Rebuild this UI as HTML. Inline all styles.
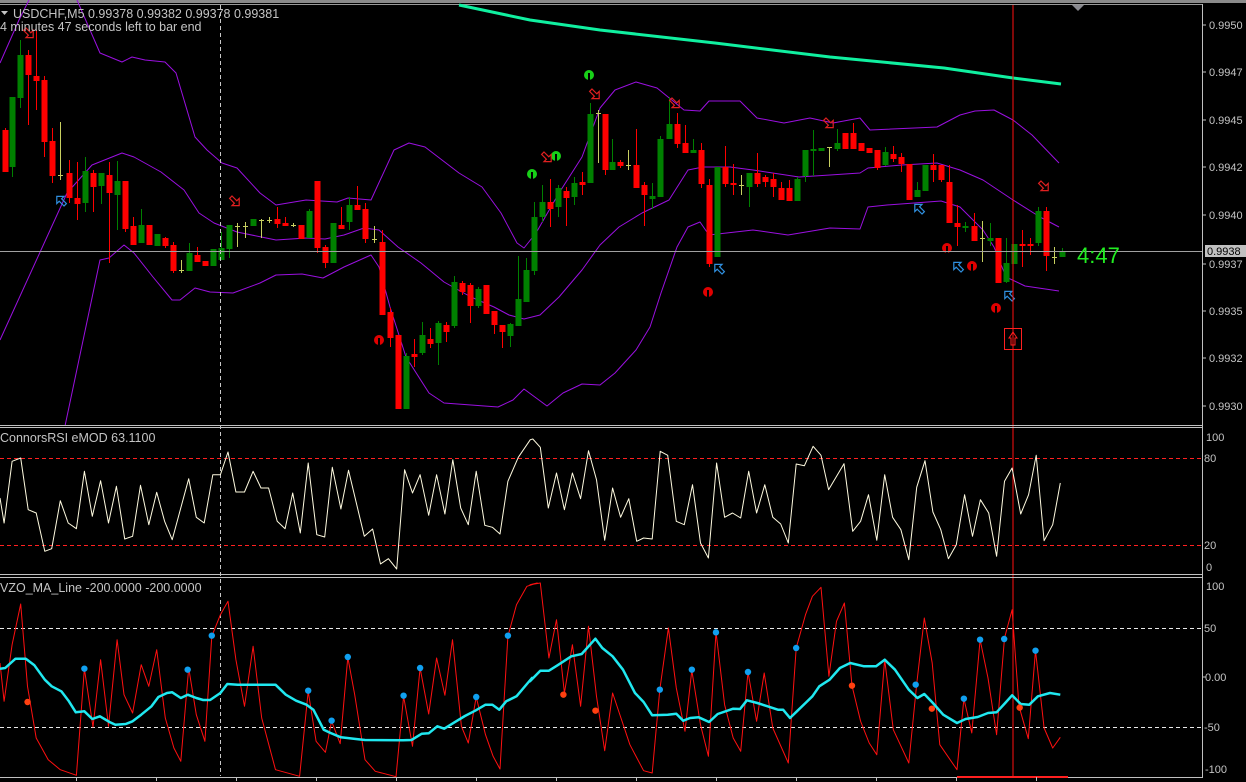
<!DOCTYPE html>
<html><head><meta charset="utf-8"><style>
html,body{margin:0;padding:0;background:#000;width:1246px;height:782px;overflow:hidden}
svg{display:block}
text{font-family:"Liberation Sans","DejaVu Sans",sans-serif}
</style></head><body>
<svg id="s" width="1246" height="782" xmlns="http://www.w3.org/2000/svg">
<rect width="1246" height="782" fill="#000"/>
<rect x="0" y="0" width="1246" height="3" fill="#8a8a8a"/>
<line x1="0" y1="4.5" x2="1202" y2="4.5" stroke="#9a9a9a"/>
<polygon points="1072,5 1084,5 1078,11" fill="#8a8a90"/>
<g id="main"></g>
<line x1="220.5" y1="5" x2="220.5" y2="776" stroke="#c8c8c8" stroke-dasharray="4,3"/>
<line x1="1013" y1="5" x2="1013" y2="777" stroke="#ff1010"/>
<g stroke="#c0c0c0" fill="none">
<line x1="1202.5" y1="4" x2="1202.5" y2="778"/>
<line x1="0" y1="425.5" x2="1203" y2="425.5"/>
<line x1="0" y1="427.5" x2="1203" y2="427.5"/>
<line x1="0" y1="574.5" x2="1203" y2="574.5"/>
<line x1="0" y1="577.5" x2="1203" y2="577.5"/>
<line x1="0" y1="777.5" x2="1203" y2="777.5"/>
</g>
<line x1="0" y1="251.5" x2="1202" y2="251.5" stroke="#a0a0a0"/>
<g font-size="12.5" fill="#c4c4c4">
<text x="13" y="18">USDCHF,M5  0.99378 0.99382 0.99378 0.99381</text>
<text x="0" y="31">4 minutes 47 seconds left to bar end</text>
<text x="0" y="442">ConnorsRSI eMOD 63.1100</text>
<text x="0" y="592">VZO_MA_Line -200.0000 -200.0000</text>
</g>
<polygon points="1,11 8,11 4.5,15" fill="#c4c4c4"/>
<g font-size="11" fill="#c4c4c4" id="ax">
<text x="1209" y="29">0.9950</text><text x="1209" y="76">0.9947</text>
<text x="1209" y="124">0.9945</text><text x="1209" y="171">0.9942</text>
<text x="1209" y="219">0.9940</text><text x="1209" y="268">0.9937</text>
<text x="1209" y="315">0.9935</text><text x="1209" y="362">0.9932</text>
<text x="1209" y="410">0.9930</text>
<text x="1206" y="441">100</text><text x="1204" y="462">80</text>
<text x="1204" y="549">20</text><text x="1206" y="571">0</text>
<text x="1206" y="590">100</text><text x="1204" y="632">50</text>
<text x="1205" y="681">0.00</text><text x="1204" y="731">-50</text>
<text x="1205" y="773">-100</text>
</g>
<rect x="1205" y="245" width="41" height="12" fill="#c0c0c0"/>
<text x="1207" y="255" font-size="11" fill="#000">0.9938</text>
<g stroke="#c0c0c0">
<line x1="1202" y1="25" x2="1206" y2="25"/><line x1="1202" y1="72" x2="1206" y2="72"/>
<line x1="1202" y1="120" x2="1206" y2="120"/><line x1="1202" y1="167" x2="1206" y2="167"/>
<line x1="1202" y1="215" x2="1206" y2="215"/><line x1="1202" y1="264" x2="1206" y2="264"/>
<line x1="1202" y1="311" x2="1206" y2="311"/><line x1="1202" y1="358" x2="1206" y2="358"/>
<line x1="1202" y1="406" x2="1206" y2="406"/><line x1="1202" y1="677" x2="1206" y2="677"/>
</g>
<text x="1077" y="263" font-size="22" fill="#22ee22">4:47</text>
<rect x="1004.5" y="328.5" width="17" height="21" fill="none" stroke="#ff2020"/>
<path d="M1013,332 L1009,338 L1011,338 L1011,345 L1015,345 L1015,338 L1017,338 Z" fill="none" stroke="#ff2020"/>
<line x1="957" y1="777" x2="1068" y2="777" stroke="#ff2020" stroke-width="2"/>
</svg>
<script>
var s=document.getElementById('s'),g=document.getElementById('main'),NS='http://www.w3.org/2000/svg';
function el(t,a,p){var e=document.createElementNS(NS,t);for(var k in a)e.setAttribute(k,a[k]);(p||g).appendChild(e);return e;}
function pl(pts,c,w,p){el('polyline',{points:pts.map(function(q){return q.join(',')}).join(' '),fill:'none',stroke:c,'stroke-width':w||1,'stroke-linejoin':'round'},p);}
var P='#9a10e0';
pl([[0,63],[19,20],[29,0]],P);
pl([[77,0],[100,53],[122,62],[132,57],[145,60],[165,62],[176,73],[195,137],[207,150],[222,163],[237,168],[260,193],[276,205],[306,200],[337,202],[348,198],[371,200],[394,150],[409,143],[425,147],[459,173],[482,187],[501,213],[517,243],[524,248],[536,233],[559,193],[582,157],[600,108],[615,90],[636,82],[657,88],[684,110],[700,111],[709,101],[740,101],[757,118],[784,123],[810,118],[833,123],[860,118],[870,130],[937,127],[960,115],[975,111],[994,110],[1013,120],[1032,135],[1059,163]],P);
pl([[0,340],[67,193],[92,165],[122,153],[134,157],[161,172],[184,190],[199,213],[214,223],[237,232],[276,240],[306,238],[325,239],[344,235],[364,228],[379,230],[398,247],[421,263],[444,282],[471,297],[494,307],[509,315],[524,319],[540,315],[559,297],[582,270],[600,245],[619,227],[642,213],[669,200],[688,170],[703,167],[730,167],[753,170],[799,177],[830,175],[860,173],[868,168],[902,165],[937,163],[960,170],[983,180],[1013,200],[1040,217],[1059,227]],P);
pl([[65,426],[100,260],[109,258],[124,245],[134,253],[153,277],[172,300],[180,300],[195,288],[210,292],[233,293],[260,283],[276,275],[302,274],[323,278],[344,267],[371,255],[379,267],[390,307],[406,357],[429,393],[444,403],[498,407],[513,400],[524,389],[547,406],[563,393],[582,384],[600,385],[615,373],[636,350],[650,327],[661,293],[677,247],[688,227],[700,222],[709,235],[753,230],[788,235],[830,228],[860,229],[868,207],[887,205],[941,201],[960,207],[983,230],[994,247],[1006,277],[1025,286],[1059,291]],P);
pl([[459,5],[530,20],[600,30],[715,43],[830,57],[944,68],[1013,78],[1061,84]],'#10f0a0',3);
var C=[[5,'R',130,172,128,172],[12,'G',97,167,97,177],[20,'G',55,98,40,108],[28,'R',55,75,50,125],[36,'R',76,81,30,110],[44,'R',80,142,76,157],[52,'R',141,176,128,183],[60,'Y',175,175,122,180],[69,'R',173,198,160,203],[77,'R',198,204,162,220],[85,'G',171,203,157,212],[93,'R',173,187,170,212],[101,'G',173,186,173,204],[109,'R',175,193,162,263],[117,'G',181,195,161,230],[125,'R',181,229,181,232],[133,'R',226,245,217,245],[141,'G',225,243,209,243],[149,'R',225,245,225,245],[157,'G',234,246,234,246],[165,'R',238,246,237,248],[173,'R',245,271,242,273],[181,'Y',270,270,260,273],[189,'G',253,271,243,271],[197,'R',255,262,247,262],[205,'R',261,266,261,266],[213,'G',249,266,249,266],[221,'G',248,260,232,260],[229,'G',225,249,225,258],[237,'Y',226,226,223,247],[245,'Y',226,226,222,238],[253,'G',219,226,219,226],[261,'Y',220,220,219,238],[269,'Y',220,220,217,223],[277,'R',219,224,207,228],[285,'R',223,226,217,226],[293,'Y',225,225,223,227],[301,'R',225,239,225,239],[309,'G',211,238,209,238],[317,'R',181,248,181,253],[325,'R',247,263,245,268],[333,'G',223,263,223,263],[341,'R',225,229,207,229],[349,'G',205,222,197,230],[357,'R',205,210,186,210],[365,'R',209,239,203,243],[374,'Y',239,239,226,243],[382,'R',242,315,230,315],[390,'R',312,338,308,347],[398,'R',335,409,335,409],[406,'G',356,409,353,409],[414,'R',354,357,339,367],[422,'G',335,353,322,355],[430,'R',339,344,328,348],[438,'G',323,343,321,365],[446,'R',325,332,322,342],[454,'G',282,326,276,328],[462,'R',283,292,281,295],[470,'R',285,306,283,323],[478,'G',289,306,287,308],[486,'R',285,314,285,314],[494,'R',311,325,311,334],[502,'R',325,332,325,348],[510,'G',324,336,323,347],[518,'G',299,326,256,326],[526,'G',270,302,258,302],[534,'G',217,271,202,275],[542,'G',202,217,185,222],[550,'R',202,209,179,227],[558,'G',188,207,185,217],[566,'R',191,198,187,226],[574,'G',183,197,177,205],[582,'R',182,185,172,195],[590,'G',114,183,103,183],[598,'Y',113,113,110,163],[605,'R',114,170,114,175],[612,'G',162,170,139,170],[620,'R',162,166,160,168],[628,'Y',165,165,150,170],[636,'R',165,188,129,188],[644,'R',185,195,182,226],[652,'G',196,199,183,209],[660,'G',139,197,136,197],[669,'G',124,139,97,139],[677,'R',124,144,113,148],[685,'R',143,153,125,153],[693,'G',150,153,139,153],[701,'R',150,184,143,188],[709,'R',185,264,179,267],[717,'G',167,257,167,257],[725,'R',167,184,146,187],[733,'R',183,185,164,195],[741,'Y',185,185,175,195],[749,'G',173,187,173,207],[757,'R',173,184,153,187],[765,'R',177,182,175,187],[773,'R',179,187,173,197],[781,'R',188,200,182,200],[789,'R',188,201,180,201],[797,'G',179,201,177,201],[805,'G',150,176,150,182],[813,'G',149,151,130,176],[821,'G',148,151,148,151],[829,'Y',147,147,147,167],[837,'G',143,149,129,151],[845,'R',133,149,133,149],[853,'R',133,149,123,149],[861,'R',143,151,143,151],[869,'R',148,153,148,153],[877,'R',150,168,150,170],[885,'G',152,165,147,166],[893,'R',154,159,146,162],[901,'R',157,164,153,172],[909,'R',164,200,164,200],[917,'G',190,197,182,197],[925,'G',165,191,165,191],[933,'R',165,170,154,182],[941,'R',165,180,165,182],[949,'R',182,223,165,223],[957,'R',223,227,205,246],[965,'G',226,227,222,232],[974,'R',226,241,213,241],[982,'Y',238,238,221,262],[990,'G',238,241,223,246],[998,'R',238,283,238,283],[1006,'G',263,282,238,283],[1014,'G',244,264,244,264],[1022,'R',244,246,230,267],[1030,'R',244,246,238,255],[1038,'G',211,243,207,246],[1046,'R',211,256,207,271],[1054,'Y',257,257,247,264],[1062,'G',252,257,248,257]];
var col={R:'#ff0000',G:'#008000',Y:'#c8d060'};
C.forEach(function(c){var k=col[c[1]];el('line',{x1:c[0]+.5,y1:c[4],x2:c[0]+.5,y2:c[5],stroke:k});
 if(c[1]=='Y'){el('line',{x1:c[0]-2,y1:c[2]+.5,x2:c[0]+3,y2:c[2]+.5,stroke:k});}
 else el('rect',{x:c[0]-2.5,y:c[2],width:6,height:Math.max(2,c[3]-c[2]),fill:k});});
function circ(x,y,c){el('circle',{cx:x,cy:y,r:5,fill:c});el('rect',{x:x-1,y:y-2,width:2,height:7,fill:'#000'});}
[[379,340],[708,292],[947,248],[972,266],[996,308]].forEach(function(p){circ(p[0],p[1],'#e00000');});
[[589,75],[532,174],[556,156]].forEach(function(p){circ(p[0],p[1],'#18d018');});
function arr(x,y,c,down){var d=down?'M0,0 L4,4 L6,2 L6,8 L0,8 L2,6 L-2,2 Z':'M0,0 L-4,-4 L-6,-2 L-6,-8 L0,-8 L-2,-6 L2,-2 Z';el('path',{d:d,transform:'translate('+x+','+y+') scale(1.2)',fill:'none',stroke:c});}
[[236,200],[596,93],[548,156],[676,102],[830,122],[1045,185],[30,32]].forEach(function(p){arr(p[0]-4,p[1]-4,'#e02020',true);});
[[60,202],[718,270],[918,210],[957,268],[1008,297]].forEach(function(p){arr(p[0]+4,p[1]+4,'#3090e0',false);});
var L=s;
[458,545].forEach(function(y){el('line',{x1:0,y1:y+.5,x2:1202,y2:y+.5,stroke:'#ff2020','stroke-dasharray':'4,3'},L);});
[628,727].forEach(function(y){el('line',{x1:0,y1:y+.5,x2:1202,y2:y+.5,stroke:'#e8e8e8','stroke-dasharray':'4,3'},L);});
function cv(a,ox,oy,sx){return a.map(function(q){return [(ox+q[0]/sx).toFixed(1),(oy+q[1]/3).toFixed(1)];});}
var r1=[[0,210],[12,285],[35,100],[60,90],[82,245],[105,255],[130,370],[150,362],[175,218],[198,285],[222,302],[245,130],[268,265],[292,158],[315,285],[338,175],[362,333],[385,325],[408,172],[432,290],[455,193],[478,280],[500,335],[548,152],[570,268],[593,285],[618,140],[640,140],[662,72],[685,192],[710,192],[735,130],[758,180],[780,180],[805,280],[828,302],[850,195],[872,315],[895,105],[920,320],[943,327],[965,118],[990,243],[1012,127],[1058,325],[1082,303],[1105,408],[1128,392],[1152,423],[1175,125],[1198,195],[1220,140],[1245,262],[1268,140],[1292,258],[1315,95],[1338,240],[1360,290],[1383,130],[1408,292],[1430,298],[1452,318],[1475,160],[1505,88],[1540,35]];
var r2=[[8,33],[30,58],[53,240],[77,135],[100,245],[123,135],[147,212],[170,68],[193,155],[217,337],[240,180],[263,268],[287,212],[310,340],[330,330],[355,333],[378,70],[400,82],[425,280],[448,290],[472,170],[495,345],[518,390],[542,105],[565,268],[588,255],[612,270],[635,130],[658,255],[682,170],[705,268],[728,288],[750,345],[773,108],[797,113],[822,55],[845,82],[867,185],[912,107],[937,310],[960,280],[983,200],[1007,337],[1030,140],[1053,268],[1077,305],[1100,395],[1123,178],[1147,98],[1170,252],[1193,305],[1215,392],[1238,350],[1262,200],[1285,325],[1308,215],[1332,255],[1355,385],[1378,160],[1400,120],[1425,258],[1448,200],[1470,82],[1493,338],[1518,290],[1540,165]];
pl(cv(r1,0,428,2.904).concat(cv(r2,530,428,2.904)),'#fffbe0',1,L);
var v1=[[0,255],[12,370],[35,200],[60,78],[80,325],[105,480],[140,545],[175,575],[222,592],[245,272],[270,447],[292,245],[315,445],[340,185],[360,350],[385,405],[410,260],[432,325],[455,215],[480,420],[505,510],[525,550],[548,270],[570,410],[595,490],[615,175],[640,110],[662,70],[685,245],[710,385],[735,205],[760,420],[800,575],[870,595],[895,340],[918,490],[945,523],[963,430],[988,497],[1010,238],[1030,350],[1060,545],[1090,580],[1150,596],[1172,355],[1198,505],[1220,270],[1245,408],[1268,240],[1292,352],[1314,185],[1340,445],[1360,495],[1383,357],[1410,470],[1432,535],[1452,573],[1475,175],[1500,80],[1530,25],[1560,15]];
var v2=[[0,20],[30,15],[55,240],[77,125],[100,345],[123,200],[147,385],[170,145],[193,355],[217,518],[240,345],[290,500],[330,578],[355,585],[377,335],[402,150],[425,330],[450,460],[470,277],[495,440],[518,535],[540,162],[565,380],[590,480],[612,520],[633,282],[658,430],[680,285],[705,450],[750,555],[773,210],[800,110],[820,55],[845,28],[868,295],[890,130],[913,75],[935,323],[960,430],[985,495],[1007,530],[1030,245],[1055,455],[1100,555],[1123,318],[1145,120],[1168,255],[1190,500],[1240,575],[1260,362],[1283,465],[1307,185],[1330,300],[1355,470],[1378,180],[1400,95],[1420,385],[1447,482],[1468,218],[1493,450],[1518,510],[1540,478]];
pl(cv(v1,0,578,2.904).concat(cv(v2,530,578,2.904)),'#ff1010',1,L);
var c1=[[0,272],[15,270],[45,242],[75,242],[100,262],[130,305],[150,325],[178,340],[200,370],[220,403],[245,400],[268,423],[290,415],[318,432],[335,440],[365,438],[385,430],[410,410],[440,385],[460,357],[485,345],[500,343],[525,360],[545,350],[570,360],[590,366],[610,366],[640,345],[660,318],[690,320],[800,320],[830,350],[860,368],[890,380],[910,395],[940,455],[960,465],[990,478],[1040,484],[1060,486],[1170,487],[1195,486],[1225,467],[1245,466],[1270,445],[1290,452],[1320,433],[1350,414],[1380,398],[1410,380],[1430,380],[1450,395],[1470,370],[1500,355],[1530,318],[1545,300]];
var c2=[[0,310],[30,278],[55,278],[80,262],[120,235],[150,228],[190,182],[210,210],[240,235],[270,275],[305,345],[330,372],[355,412],[400,410],[425,407],[445,428],[465,420],[490,418],[520,432],[545,408],[590,392],[610,393],[630,367],[660,375],[690,385],[720,395],[735,395],[755,420],[775,400],[800,375],[820,355],[840,325],[870,305],[900,270],[930,255],[970,265],[1005,265],[1030,245],[1060,275],[1100,335],[1125,360],[1145,348],[1170,375],[1200,410],[1240,435],[1265,423],[1300,417],[1330,405],[1355,403],[1380,375],[1400,352],[1425,378],[1450,380],[1475,355],[1510,345],[1540,350]];
pl(cv(c1,0,578,2.904).concat(cv(c2,530,578,2.904)),'#20e8f0',2.5,L);
function dots(a,ox,c){a.forEach(function(q){el('circle',{cx:ox+q[0]/2.904,cy:578+q[1]/3,r:3.2,fill:c},L);});}
dots([[245,272],[545,275],[615,173],[895,338],[963,428],[1010,237],[1172,353],[1220,270],[1383,357],[1475,173]],0,'#10a0f0');
dots([[80,372]],0,'#ff4010');
dots([[377,335],[470,275],[540,163],[633,282],[773,210],[1120,320],[1260,362],[1307,185],[1377,183],[1468,218]],530,'#10a0f0');
dots([[97,350],[190,398],[935,323],[1167,392],[1422,389]],530,'#ff4010');
[76,156,236,316,396,476,556,636,716,796,876,956,1036].forEach(function(x){el('line',{x1:x+.5,y1:777,x2:x+.5,y2:781,stroke:'#c0c0c0'},L);});
</script>
</body></html>
